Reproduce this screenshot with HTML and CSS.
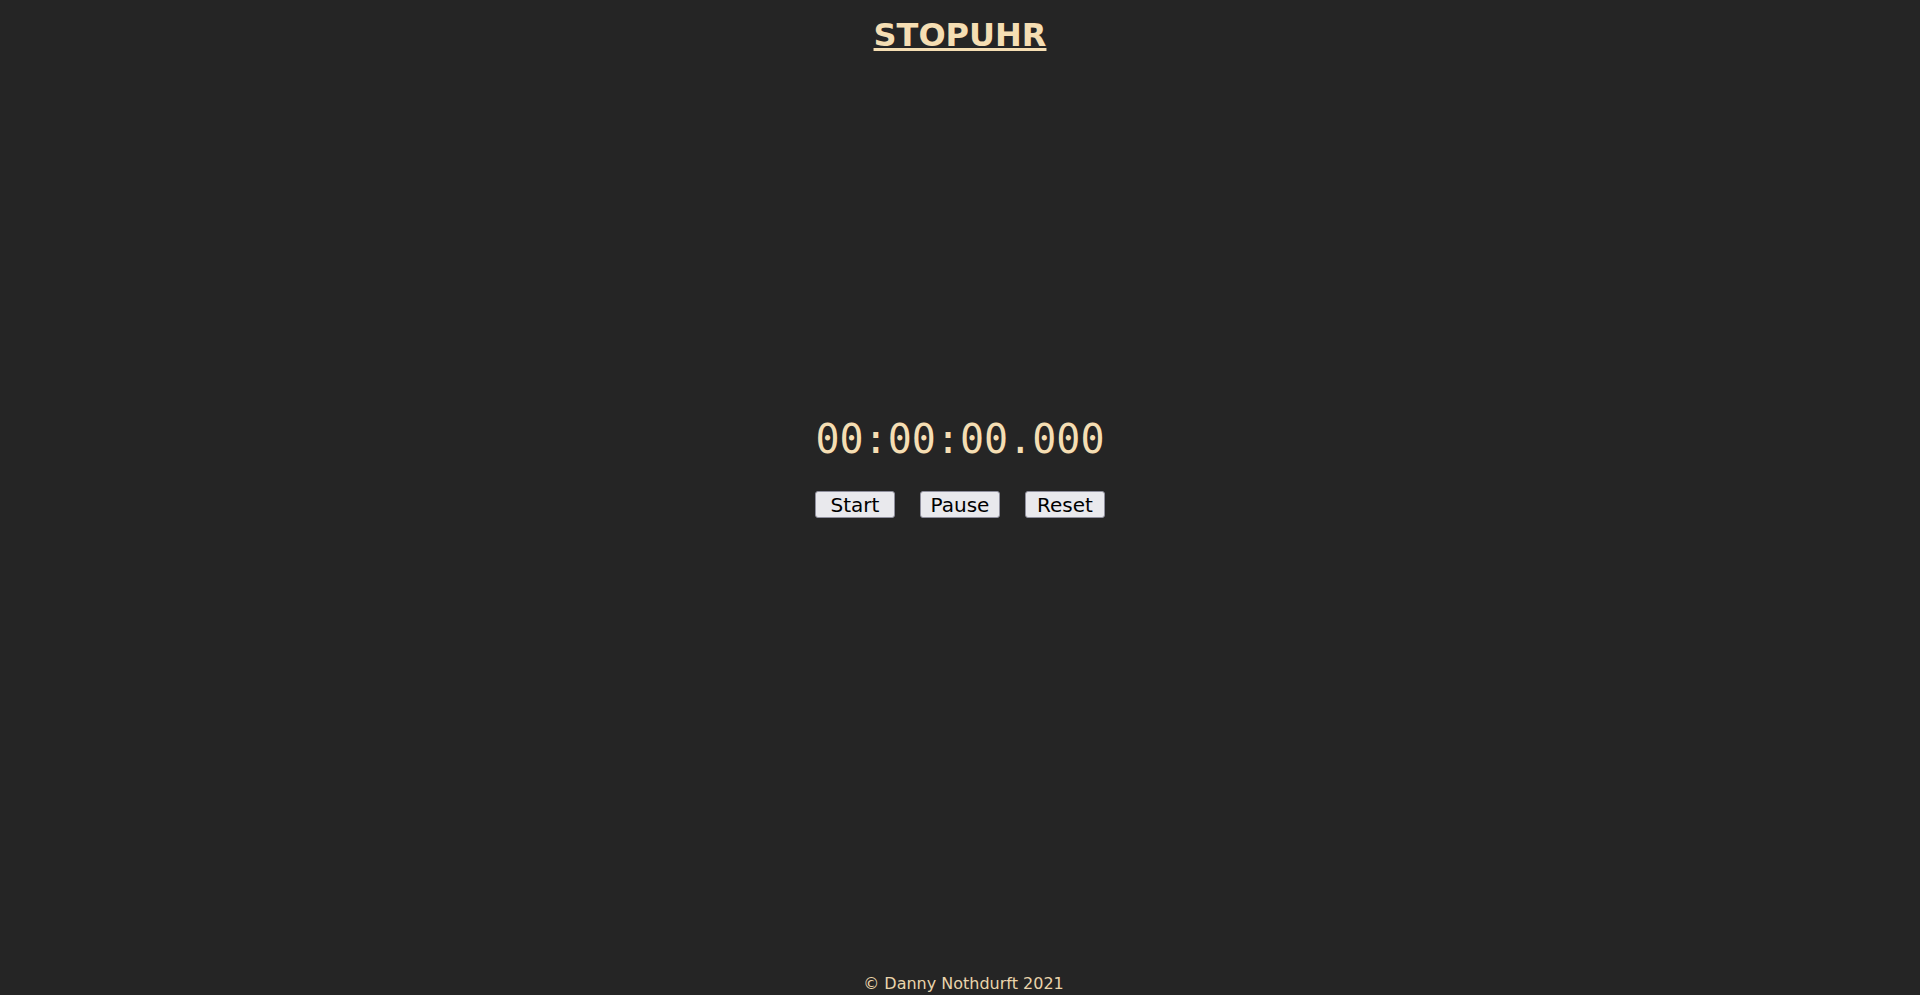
FILE: index.html
```html
<!DOCTYPE html>
<html lang="de">
<head>
<meta charset="utf-8">
<title>Stopuhr</title>
<link rel="stylesheet" href="styles.css">
</head>
<body>
<div class="page">
  <h1 class="title">STOPUHR</h1>
  <main class="watch">
    <div class="time">00:00:00.000</div>
    <div class="controls">
      <button class="btn" type="button">Start</button>
      <button class="btn" type="button">Pause</button>
      <button class="btn" type="button">Reset</button>
    </div>
  </main>
  <footer class="footer">© Danny Nothdurft 2021</footer>
</div>
</body>
</html>
```

FILE: styles.css
```css
html, body {
  margin: 0;
  padding: 0;
  background: #252525;
}
body {
  font-family: "DejaVu Sans", sans-serif;
  color: #f5deb3;
}
.page {
  height: 100vh;
  display: flex;
  flex-direction: column;
  align-items: center;
}
.title {
  margin: 16px 0 0;
  font-size: 32px;
  font-weight: bold;
  text-decoration: underline;
  line-height: normal;
}
.watch {
  margin-top: 362px;
  display: flex;
  flex-direction: column;
  align-items: center;
}
.time {
  font-family: "DejaVu Sans Mono", monospace;
  font-size: 40px;
  line-height: normal;
}
.controls {
  margin-top: 29px;
  display: flex;
  gap: 25px;
}
.btn {
  width: 80px;
  height: 27px;
  padding: 0;
  font-family: "DejaVu Sans", sans-serif;
  font-size: 20px;
  color: #000;
  background: #e9e9ed;
  border: 1px solid #8f8f9d;
  border-radius: 3px;
}
.footer {
  margin-top: auto;
  margin-bottom: 2px;
  padding-left: 7px;
  font-size: 16px;
  line-height: normal;
  color: #ead4ab;
}
```
